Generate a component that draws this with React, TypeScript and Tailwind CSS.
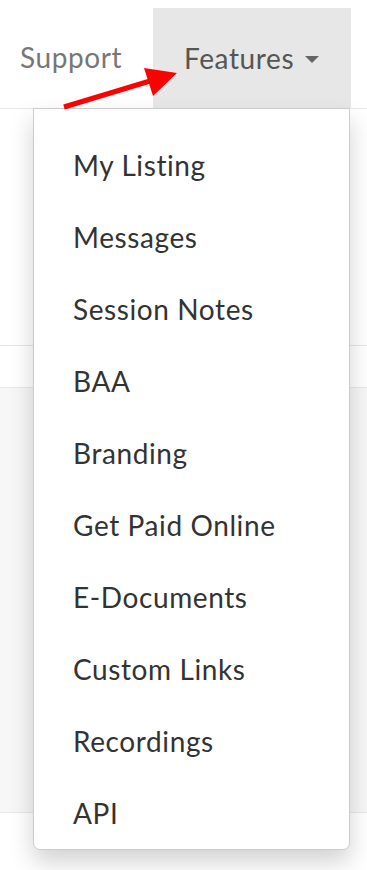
import React from "react";

const items = [
  "My Listing",
  "Messages",
  "Session Notes",
  "BAA",
  "Branding",
  "Get Paid Online",
  "E-Documents",
  "Custom Links",
  "Recordings",
  "API",
];

export default function App() {
  return (
    <div className="relative w-[367px] h-[870px] overflow-hidden bg-white font-['Lato','Liberation_Sans',sans-serif]">
      {/* header */}
      <div className="flex h-[109px] border-b border-[#e7e7e7]">
        <div className="w-[153px] flex items-center pl-[20px] pt-[6px] text-[28px] tracking-[0.6px] text-[#777777]">
          Support
        </div>
        <div className="mt-[8px] w-[198px] bg-[#e7e7e7] flex items-center pl-[31px] text-[28px] tracking-[0.6px] text-[#555555]">
          <span>Features</span>
          <span className="ml-[11px] mt-[3px] w-0 h-0 border-l-[7px] border-r-[7px] border-t-[7px] border-l-transparent border-r-transparent border-t-[#666666]" />
        </div>
      </div>
      {/* page body stripes */}
      <div className="h-[237px] border-b border-[#e7e7e7] bg-white" />
      <div className="h-[42px] border-b border-[#e7e7e7] bg-white" />
      <div className="h-[425px] border-b border-[#e7e7e7] bg-[#f7f7f7]" />

      {/* dropdown */}
      <div className="absolute left-[33px] top-[108px] w-[317px] h-[742px] bg-white border border-[#cccccc] rounded-b-[7px] shadow-[0_12px_24px_rgba(0,0,0,0.18)] pt-[20px]">
        {items.map((t) => (
          <div key={t} className="h-[72px] flex items-center pl-[39px] text-[28px] tracking-[0.6px] text-[#333333]">
            {t}
          </div>
        ))}
      </div>

      {/* red arrow annotation */}
      <svg className="absolute left-0 top-0 pointer-events-none" width="367" height="870" viewBox="0 0 367 870">
        <line x1="64" y1="107" x2="150" y2="81" stroke="#ff0000" strokeWidth="5" />
        <polygon points="177,73 144,68 153,96" fill="#ff0000" />
      </svg>
    </div>
  );
}
